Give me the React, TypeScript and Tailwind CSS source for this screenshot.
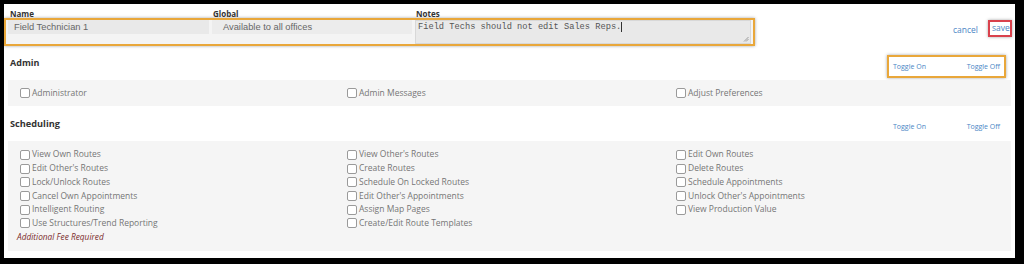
import React from "react";

const col1 = [
  "View Own Routes",
  "Edit Other's Routes",
  "Lock/Unlock Routes",
  "Cancel Own Appointments",
  "Intelligent Routing",
  "Use Structures/Trend Reporting",
];
const col2 = [
  "View Other's Routes",
  "Create Routes",
  "Schedule On Locked Routes",
  "Edit Other's Appointments",
  "Assign Map Pages",
  "Create/Edit Route Templates",
];
const col3 = [
  "Edit Own Routes",
  "Delete Routes",
  "Schedule Appointments",
  "Unlock Other's Appointments",
  "View Production Value",
];

function Check({ label }: { label: string }) {
  return (
    <div className="flex items-center h-[13.7px] text-[8.5px] text-[#757575] whitespace-nowrap">
      <span className="inline-block w-[10px] h-[10px] border border-[#9a9a9a] rounded-[2px] bg-white mr-[2px] shrink-0" />
      <span>{label}</span>
    </div>
  );
}

function Toggles({ boxed }: { boxed: boolean }) {
  return (
    <div
      className={
        "w-[119px] h-[23px] mt-[9px] mr-[9px] flex items-center justify-between px-[4px] pt-[2px] text-[7px] text-[#4a86c5] " +
        (boxed
          ? "border-2 border-[#e9a73a] shadow-[0_0_3px_rgba(0,0,0,0.35)]"
          : "border-2 border-transparent")
      }
    >
      <span>Toggle On</span>
      <span>Toggle Off</span>
    </div>
  );
}

export default function App() {
  return (
    <div
      className="w-[1024px] h-[264px] bg-black pt-[4px] pl-[4px] pr-[9px] pb-[6px]"
      style={{ fontFamily: "'Open Sans', 'Noto Sans', sans-serif" }}
    >
      <div className="w-full h-full bg-white flex flex-col">
        {/* Top fields */}
        <div className="flex pt-[5px] h-[42px]">
          <div className="w-[751px]">
            <div className="flex h-[9px] text-[8px] font-bold text-[#333] leading-[9px]">
              <span className="w-[209px] pl-[6px]">Name</span>
              <span className="w-[203px]">Global</span>
              <span>Notes</span>
            </div>
            <div
              className="h-[28px] border-2 border-[#e9a73a] shadow-[0_0_3px_rgba(0,0,0,0.35)] bg-[#f4f4f4] flex gap-[3px] pl-[2px] pr-[2px]"
              style={{ fontFamily: "'Liberation Sans', Arial, sans-serif" }}
            >
              <div className="w-[201px] h-[14px] bg-[#e9e9e9] text-[9.3px] text-[#666] pl-[6px] leading-[14px]">
                Field Technician 1
              </div>
              <div className="w-[200px] h-[14px] bg-[#ececec] text-[9.3px] text-[#666] pl-[11px] leading-[14px]">
                Available to all offices
              </div>
              <div
                className="relative flex-1 h-[24px] bg-[#e9e9e9] border border-[#d8d8d8] text-[8.7px] text-[#555] pl-[2px] leading-[13px]"
                style={{ fontFamily: "'Liberation Mono', 'Courier New', monospace" }}
              >
                Field Techs should not edit Sales Reps.
                <span className="inline-block w-px h-[10px] bg-[#333] align-middle" />
                <svg className="absolute right-[1px] bottom-[1px]" width="6" height="6" viewBox="0 0 6 6">
                  <path d="M1 5.5 L5.5 1 M3 5.5 L5.5 3" stroke="#888" strokeWidth="0.8" />
                </svg>
              </div>
            </div>
          </div>
          <div className="flex-1 flex justify-end items-start pt-[11px] pr-[3px] text-[8.5px] text-[#4a86c5]">
            <span className="mt-[4px] mr-[10px]">cancel</span>
            <span className="border-2 border-[#d9414c] shadow-[0_0_3px_rgba(0,0,0,0.35)] h-[17px] w-[24px] pl-[2px] leading-[12px]">
              save
            </span>
          </div>
        </div>

        {/* Admin header */}
        <div className="flex justify-between h-[34px]">
          <span className="text-[9px] font-bold text-[#333] pl-[6px] pt-[10px]">Admin</span>
          <Toggles boxed={true} />
        </div>
        <div className="mx-[4px] h-[26px] bg-[#f5f5f5] grid grid-cols-[327px_329px_1fr] pl-[12px] items-center">
          <Check label="Administrator" />
          <Check label="Admin Messages" />
          <Check label="Adjust Preferences" />
        </div>

        {/* Scheduling header */}
        <div className="flex justify-between h-[35px]">
          <span className="text-[9.2px] font-bold text-[#333] pl-[6px] pt-[11px]">Scheduling</span>
          <Toggles boxed={false} />
        </div>
        <div className="mx-[4px] h-[110px] bg-[#f5f5f5] pl-[12px] pt-[7px]">
          <div className="grid grid-cols-[327px_329px_1fr]">
            <div>
              {col1.map((l) => (
                <Check key={l} label={l} />
              ))}
            </div>
            <div>
              {col2.map((l) => (
                <Check key={l} label={l} />
              ))}
            </div>
            <div>
              {col3.map((l) => (
                <Check key={l} label={l} />
              ))}
            </div>
          </div>
          <div className="italic text-[8.3px] text-[#7a2a2a] ml-[-3px] h-[14px] leading-[14px]">
            Additional Fee Required
          </div>
        </div>
      </div>
    </div>
  );
}
